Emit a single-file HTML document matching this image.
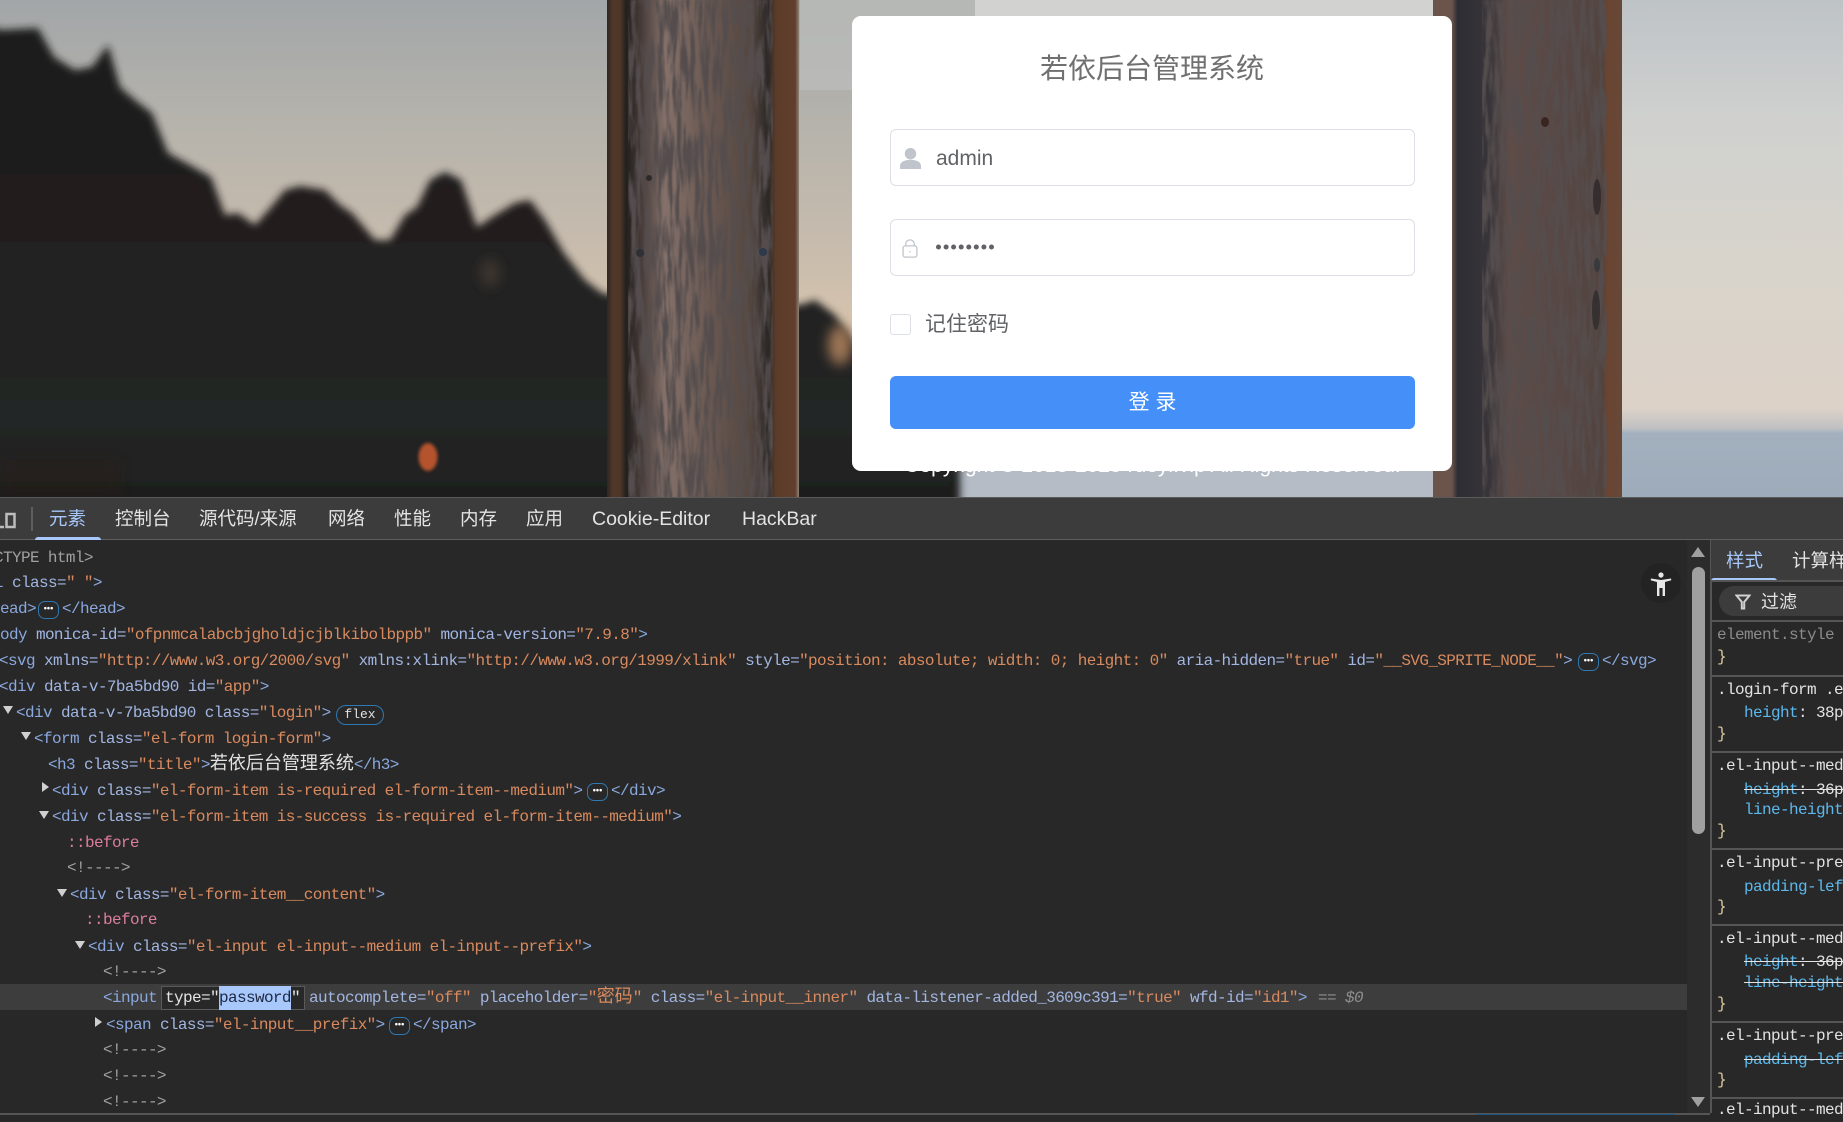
<!DOCTYPE html>
<html lang="zh"><head><meta charset="utf-8"><title>若依后台管理系统</title>
<style>
*{box-sizing:border-box}
html,body{margin:0;padding:0;width:1843px;height:1115px;overflow:hidden;background:#282828}
#bg{position:absolute;left:0;top:0;width:1843px;height:498px;display:block}
.copy{position:absolute;left:901px;top:454px;width:503px;text-align:center;color:#fff;font:21px/24px "Liberation Sans",sans-serif;white-space:nowrap}
.card{position:absolute;left:852px;top:16px;width:600px;height:455px;background:#fff;border-radius:9px}
.title{position:absolute;left:0;top:35px;width:100%;text-align:center;font:28px/36px "Liberation Sans","Noto Sans CJK SC",sans-serif;color:#707070}
.inp{position:absolute;left:38px;width:525px;height:57px;border:1.5px solid #dcdfe6;border-radius:6px}
.inp .t{position:absolute;left:45px;top:2px;font:21px/54px "Liberation Sans",sans-serif;color:#606266}
.chk{position:absolute;left:38px;top:298px;width:21px;height:21px;border:1.5px solid #dcdfe6;border-radius:3px}
.rem{position:absolute;left:73px;top:294px;font:21px/30px "Liberation Sans","Noto Sans CJK SC",sans-serif;color:#606266}
.btn{position:absolute;left:38px;top:360px;width:525px;height:53px;background:#448ff8;border-radius:6px;color:#fff;text-align:center;font:21px/53px "Liberation Sans","Noto Sans CJK SC",sans-serif}
.dev{position:absolute;left:0;top:497px;width:1843px;height:618px;background:#282828;overflow:hidden}
.bar{position:absolute;left:0;top:0;width:1843px;height:43px;background:#3c3c3c;border-top:1.5px solid #5a5a5a;border-bottom:1.5px solid #5e5e5e}
.tab{position:absolute;top:505px;font:18.5px/28px "Liberation Sans","Noto Sans CJK SC",sans-serif;color:#e3e3e3;white-space:nowrap}
.r{position:absolute;height:26px;font:16px/26px "Liberation Mono",monospace;letter-spacing:-.613px;white-space:pre;color:#8aa8de}
.b{color:#8aa8de}.a{color:#a2b6e2}.o{color:#d98a5e}.g{color:#a0a0a0}.p{color:#dc7e9c}.w{color:#e3e3e3}
.c{font-family:"Noto Sans CJK SC",sans-serif;font-size:18px;letter-spacing:0;line-height:0}
.pill{position:absolute;border:1.5px solid #2f78b0;border-radius:7px;width:21px;height:18px;color:#fff;text-align:center;font:bold 9px/13px "Liberation Sans",sans-serif;letter-spacing:0}
.tri{position:absolute;width:0;height:0}
.s{position:absolute;left:1717px;height:24px;font:16px/24px "Liberation Mono",monospace;letter-spacing:-.6px;white-space:pre;color:#e3e3e3;width:126px;overflow:hidden}
.hr{position:absolute;left:1711px;width:132px;height:1.5px;background:#555}
.cy{color:#5cb8ec}
.st{text-decoration:line-through;text-decoration-color:#e3e3e3}
.brace{color:#d9c9a0}
</style></head><body>

<svg id="bg" viewBox="0 0 1843 498" xmlns="http://www.w3.org/2000/svg" preserveAspectRatio="none">
<defs>
<linearGradient id="sky" x1="0" y1="0" x2="0" y2="1">
<stop offset="0" stop-color="#a2a6a8"/><stop offset=".25" stop-color="#b6b3ac"/><stop offset=".48" stop-color="#c6bbad"/><stop offset=".68" stop-color="#d8c4ad"/><stop offset=".85" stop-color="#e0b998"/><stop offset="1" stop-color="#d8a880"/>
</linearGradient>
<linearGradient id="sky2" x1="0" y1="0" x2="0" y2="1">
<stop offset="0" stop-color="#bec3c6"/><stop offset=".25" stop-color="#d0d1cf"/><stop offset=".55" stop-color="#d9d4cb"/><stop offset=".82" stop-color="#dcd2c8"/><stop offset=".86" stop-color="#c0c0c2"/><stop offset=".87" stop-color="#a3b0be"/><stop offset="1" stop-color="#9dabba"/>
</linearGradient>
<linearGradient id="w1" x1="0" y1="0" x2="1" y2="0">
<stop offset="0" stop-color="#2e2624"/><stop offset=".03" stop-color="#523828"/><stop offset=".07" stop-color="#4c3628"/><stop offset=".1" stop-color="#221f1e"/><stop offset=".17" stop-color="#423836"/><stop offset=".3" stop-color="#85716a"/><stop offset=".5" stop-color="#6e5c55"/><stop offset=".75" stop-color="#54463f"/><stop offset=".84" stop-color="#2a2726"/><stop offset=".88" stop-color="#5c3c2a"/><stop offset=".98" stop-color="#613e2c"/><stop offset="1" stop-color="#8a8478"/>
</linearGradient>
<linearGradient id="w2" x1="0" y1="0" x2="1" y2="0">
<stop offset="0" stop-color="#6a544c"/><stop offset=".1" stop-color="#6a544c"/><stop offset=".13" stop-color="#2d2d33"/><stop offset=".3" stop-color="#38353a"/><stop offset=".4" stop-color="#5e4c48"/><stop offset=".7" stop-color="#574744"/><stop offset=".9" stop-color="#53433e"/><stop offset=".92" stop-color="#6a4430"/><stop offset="1" stop-color="#66483a"/>
</linearGradient>
<linearGradient id="tree" x1="0" y1="0" x2="0" y2="1">
<stop offset="0" stop-color="#1b1a1a"/><stop offset=".5" stop-color="#222020"/><stop offset=".8" stop-color="#232625"/><stop offset="1" stop-color="#1d1c1c"/>
</linearGradient>
<filter id="bl" x="-5%" y="-5%" width="110%" height="110%"><feGaussianBlur stdDeviation="4"/></filter>
<filter id="bl3" x="-50%" y="-50%" width="200%" height="200%"><feGaussianBlur stdDeviation="6"/></filter>
<filter id="bl2"><feGaussianBlur stdDeviation="1.6"/></filter>
<filter id="wood" x="0" y="0" width="1" height="1">
<feTurbulence type="fractalNoise" baseFrequency="0.22 0.022" numOctaves="4" seed="7"/>
<feColorMatrix values="0 0 0 0 .09  0 0 0 0 .075  0 0 0 0 .075  4 0 0 0 -1.55"/>
<feGaussianBlur stdDeviation=".5"/>
</filter>
</defs>
<rect width="1843" height="498" fill="url(#sky)"/>
<rect x="1610" width="233" height="498" fill="url(#sky2)"/>
<rect x="800" width="175" height="90" fill="#bcbdbb" opacity=".75"/>
<rect x="975" width="470" height="498" fill="#d2d2d0"/>
<rect x="953" y="440" width="490" height="58" fill="#b6bcc6"/>
<polygon filter="url(#bl)" fill="url(#tree)" points="-20,20 0,30 38,28 54,57 75,70 92,67 108,45 120,87 135,100 152,113 168,153 190,165 211,177 225,215 238,213 255,225 271,207 285,190 300,186 325,190 340,205 352,213 375,240 390,240 405,215 417,207 430,180 445,172 461,180 477,227 495,215 515,203 530,200 545,220 564,253 585,280 602,293 640,300 800,305 815,300 835,315 860,350 960,370 960,520 -20,520"/>
<ellipse cx="840" cy="345" rx="12" ry="20" fill="#9c7454" filter="url(#bl3)"/>
<ellipse cx="428" cy="457" rx="9.5" ry="14" fill="#b5532d" filter="url(#bl2)"/>
<ellipse cx="490" cy="273" rx="10" ry="14" fill="#3e352e" filter="url(#bl3)"/>
<rect x="0" y="460" width="120" height="38" fill="#2a1a18" opacity=".4" filter="url(#bl3)"/>
<rect x="607" width="192" height="498" fill="url(#w1)"/>
<rect x="628" width="145" height="498" filter="url(#wood)"/>
<circle cx="640" cy="253" r="4" fill="#2e3036"/><circle cx="763" cy="252" r="4" fill="#2c3a4a"/><circle cx="649" cy="178" r="3" fill="#2c2a2a"/>
<rect x="1433" width="189" height="498" fill="url(#w2)"/>
<rect x="1482" width="125" height="498" filter="url(#wood)"/>
<ellipse cx="1545" cy="122" rx="4" ry="5" fill="#3a2422"/><ellipse cx="1597" cy="197" rx="4" ry="18" fill="#2a2426" opacity=".7"/><ellipse cx="1597" cy="265" rx="3" ry="7" fill="#2c343a" opacity=".7"/><ellipse cx="1596" cy="310" rx="4" ry="20" fill="#2a2628" opacity=".7"/>
</svg>

<div class="copy">Copyright © 2018-2025 ruoyi.vip All Rights Reserved.</div>

<div class="card">
<div class="title">若依后台管理系统</div>
<div class="inp" style="top:113px"><svg style="position:absolute;left:9px;top:18px" width="21" height="21" viewBox="0 0 22 22"><circle cx="11" cy="6" r="6" fill="#c0c4cc"/><path d="M0 22v-3c0-4 4-6.500 11-6.500s11 2.500 11 6.500v3z" fill="#c0c4cc"/></svg><span class="t">admin</span></div>
<div class="inp" style="top:203px"><svg style="position:absolute;left:11px;top:19px" width="16" height="19" viewBox="0 0 18 22" fill="none" stroke="#c0c4cc" stroke-width="1.5"><rect x="1" y="8" width="16" height="13" rx="2.500"/><path d="M4 8V6a5 5 0 0 1 10 0v2"/><path d="M9 14v1.500" stroke-width="1.600"/></svg><span class="t" style="left:45px;top:0"><svg width="58" height="54" viewBox="0 0 58 54" style="display:block" fill="#606266"><circle cx="2.500" cy="27" r="2.500"/><circle cx="10.100" cy="27" r="2.500"/><circle cx="17.600" cy="27" r="2.500"/><circle cx="25.200" cy="27" r="2.500"/><circle cx="32.800" cy="27" r="2.500"/><circle cx="40.300" cy="27" r="2.500"/><circle cx="47.900" cy="27" r="2.500"/><circle cx="55.500" cy="27" r="2.500"/></svg></span></div>
<div class="chk"></div>
<div class="rem">记住密码</div>
<div class="btn">登 录</div>
</div>

<div class="dev"><div class="bar"></div></div>

<svg style="position:absolute;left:0;top:508px" width="20" height="24" viewBox="0 0 20 24" fill="none" stroke="#bdbdbd" stroke-width="2.500"><rect x="6.500" y="6" width="8" height="13"/><path d="M-2 19H4"/></svg>
<div style="position:absolute;left:31px;top:507px;width:1.5px;height:24px;background:#5e5e5e"></div>
<div class="tab" style="left:49px;color:#a8c7fa">元素</div>
<div style="position:absolute;left:35px;top:537px;width:66px;height:3px;background:#a8c7fa;border-radius:3px 3px 0 0"></div>
<div class="tab" style="left:115px">控制台</div>
<div class="tab" style="left:199px">源代码/来源</div>
<div class="tab" style="left:328px">网络</div>
<div class="tab" style="left:394px">性能</div>
<div class="tab" style="left:460px">内存</div>
<div class="tab" style="left:526px">应用</div>
<div class="tab" style="left:592px;font-size:19.500px">Cookie-Editor</div>
<div class="tab" style="left:742px;font-size:19.500px">HackBar</div>

<!-- highlight row -->
<div style="position:absolute;left:0;top:984px;width:1687px;height:26px;background:#3d3d3d"></div>
<div style="position:absolute;left:161px;top:986px;width:144px;height:24px;background:#282828;border:1.5px solid #5a5a5a"></div>
<div style="position:absolute;left:219px;top:986px;width:72px;height:24px;background:#a8c7fa"></div>

<div class="r g" style="left:-6px;top:545px">CTYPE html&gt;</div>
<div class="r" style="left:-6px;top:570px"><span class="b">l</span> <span class="a">class</span><span class="a">=</span><span class="o">" "</span><span class="b">&gt;</span></div>
<div class="r" style="left:-9px;top:596px">head&gt;</div>
<div class="pill" style="left:38px;top:601px">•••</div>
<div class="r" style="left:62px;top:596px">&lt;/head&gt;</div>
<div class="r" style="left:-9px;top:622px">body <span class="a">monica-id=</span><span class="o">"ofpnmcalabcbjgholdjcjblkibolbppb"</span> <span class="a">monica-version=</span><span class="o">"7.9.8"</span>&gt;</div>
<div class="r" style="left:-1px;top:648px">&lt;svg <span class="a">xmlns=</span><span class="o">"http://www.w3.org/2000/svg"</span> <span class="a">xmlns:xlink=</span><span class="o">"http://www.w3.org/1999/xlink"</span> <span class="a">style=</span><span class="o">"position: absolute; width: 0; height: 0"</span> <span class="a">aria-hidden=</span><span class="o">"true"</span> <span class="a">id=</span><span class="o">"__SVG_SPRITE_NODE__"</span>&gt;</div>
<div class="pill" style="left:1578px;top:653px">•••</div>
<div class="r" style="left:1602px;top:648px">&lt;/svg&gt;</div>
<div class="r" style="left:-1px;top:674px">&lt;div <span class="a">data-v-7ba5bd90</span> <span class="a">id=</span><span class="o">"app"</span>&gt;</div>
<div class="tri" style="left:3px;top:706px;border-left:5.500px solid transparent;border-right:5.500px solid transparent;border-top:8px solid #d0d0d0"></div>
<div class="r" style="left:16px;top:700px">&lt;div <span class="a">data-v-7ba5bd90</span> <span class="a">class=</span><span class="o">"login"</span>&gt;</div>
<div class="pill" style="left:336px;top:705px;width:48px;height:20px;border-radius:10px;font:13px/17px 'Liberation Mono',monospace;color:#e3e3e3">flex</div>
<div class="tri" style="left:21px;top:732px;border-left:5.500px solid transparent;border-right:5.500px solid transparent;border-top:8px solid #d0d0d0"></div>
<div class="r" style="left:34px;top:726px">&lt;form <span class="a">class=</span><span class="o">"el-form login-form"</span>&gt;</div>
<div class="r" style="left:48px;top:752px">&lt;h3 <span class="a">class=</span><span class="o">"title"</span>&gt;<span class="c w">若依后台管理系统</span>&lt;/h3&gt;</div>
<div class="tri" style="left:42px;top:782px;border-top:5.500px solid transparent;border-bottom:5.500px solid transparent;border-left:7px solid #d0d0d0"></div>
<div class="r" style="left:52px;top:778px">&lt;div <span class="a">class=</span><span class="o">"el-form-item is-required el-form-item--medium"</span>&gt;</div>
<div class="pill" style="left:587px;top:783px">•••</div>
<div class="r" style="left:611px;top:778px">&lt;/div&gt;</div>
<div class="tri" style="left:39px;top:811px;border-left:5.500px solid transparent;border-right:5.500px solid transparent;border-top:8px solid #d0d0d0"></div>
<div class="r" style="left:52px;top:804px">&lt;div <span class="a">class=</span><span class="o">"el-form-item is-success is-required el-form-item--medium"</span>&gt;</div>
<div class="r p" style="left:67px;top:830px">::before</div>
<div class="r g" style="left:67px;top:855px">&lt;!----&gt;</div>
<div class="tri" style="left:57px;top:889px;border-left:5.500px solid transparent;border-right:5.500px solid transparent;border-top:8px solid #d0d0d0"></div>
<div class="r" style="left:70px;top:882px">&lt;div <span class="a">class=</span><span class="o">"el-form-item__content"</span>&gt;</div>
<div class="r p" style="left:85px;top:907px">::before</div>
<div class="tri" style="left:75px;top:941px;border-left:5.500px solid transparent;border-right:5.500px solid transparent;border-top:8px solid #d0d0d0"></div>
<div class="r" style="left:88px;top:934px">&lt;div <span class="a">class=</span><span class="o">"el-input el-input--medium el-input--prefix"</span>&gt;</div>
<div class="r g" style="left:103px;top:959px">&lt;!----&gt;</div>
<div class="r" style="left:103px;top:985px">&lt;input</div>
<div class="r w" style="left:165px;top:985px">type="</div>
<div class="r" style="left:219px;top:985px;color:#1d2a44">password</div>
<div class="r w" style="left:291px;top:985px">"</div>
<div class="r" style="left:309px;top:985px"><span class="a">autocomplete=</span><span class="o">"off"</span> <span class="a">placeholder=</span><span class="o">"<span class="c">密码</span>"</span> <span class="a">class=</span><span class="o">"el-input__inner"</span> <span class="a">data-listener-added_3609c391=</span><span class="o">"true"</span> <span class="a">wfd-id=</span><span class="o">"id1"</span>&gt;</div>
<div class="r g" style="left:1318px;top:985px;font-style:italic;color:#8f8f8f">== $0</div>
<div class="tri" style="left:95px;top:1017px;border-top:5.500px solid transparent;border-bottom:5.500px solid transparent;border-left:7px solid #d0d0d0"></div>
<div class="r" style="left:106px;top:1012px">&lt;span <span class="a">class=</span><span class="o">"el-input__prefix"</span>&gt;</div>
<div class="pill" style="left:389px;top:1017px">•••</div>
<div class="r" style="left:413px;top:1012px">&lt;/span&gt;</div>
<div class="r g" style="left:103px;top:1037px">&lt;!----&gt;</div>
<div class="r g" style="left:103px;top:1063px">&lt;!----&gt;</div>
<div class="r g" style="left:103px;top:1089px">&lt;!----&gt;</div>

<!-- scrollbar -->
<div style="position:absolute;left:1687px;top:540px;width:23px;height:573px;background:#2c2c2c"></div>
<div class="tri" style="left:1691px;top:547px;border-left:7.500px solid transparent;border-right:7.500px solid transparent;border-bottom:10px solid #a0a0a0"></div>
<div style="position:absolute;left:1692px;top:567px;width:13px;height:267px;background:#a0a0a0;border-radius:7px"></div>
<div class="tri" style="left:1691px;top:1097px;border-left:7.500px solid transparent;border-right:7.500px solid transparent;border-top:10px solid #a0a0a0"></div>

<!-- accessibility button -->
<div style="position:absolute;left:1641px;top:563px;width:40px;height:40px;border-radius:50%;background:#232323"></div>
<svg style="position:absolute;left:1650px;top:571px" width="22" height="26" viewBox="0 0 22 26" fill="#e8e8e8"><circle cx="11" cy="4" r="2.600"/><path d="M1 7.500 11 9l10-1.500.3 1.800-6.300 1.700V25h-2.400v-8h-3.200v8H7V11L.7 9.300z"/></svg>

<!-- styles pane -->
<div style="position:absolute;left:1710px;top:540px;width:1.5px;height:573px;background:#555"></div>
<div style="position:absolute;left:1711px;top:540px;width:132px;height:40px;background:#3c3c3c"></div>
<div class="tab" style="left:1726px;top:547px;color:#a8c7fa">样式</div>
<div class="tab" style="left:1792px;top:547px;width:51px;overflow:hidden">计算样式</div>
<div style="position:absolute;left:1711px;top:578px;width:66px;height:3px;background:#a8c7fa;border-radius:3px 3px 0 0"></div>
<div class="hr" style="top:580px"></div>
<div style="position:absolute;left:1719px;top:586px;width:140px;height:30px;border-radius:15px;background:#3c3c3c"></div>
<svg style="position:absolute;left:1735px;top:594px" width="16" height="16" viewBox="0 0 16 16" fill="none" stroke="#d0d0d0" stroke-width="2"><path d="M1.500 1.500h13L9.200 8v6.500H6.800V8z"/></svg>
<div class="tab" style="left:1761px;top:588px;font-size:18px">过滤</div>
<div class="hr" style="top:620px"></div>

<div class="s" style="top:623px;color:#8b8b8b">element.style</div>
<div class="s brace" style="top:645px">}</div>
<div class="hr" style="top:675px"></div>
<div class="s" style="top:678px">.login-form .el-input</div>
<div class="s" style="top:701px">   <span class="cy">height</span>: 38px</div>
<div class="s brace" style="top:722px">}</div>
<div class="hr" style="top:751px"></div>
<div class="s" style="top:754px">.el-input--medium</div>
<div class="s" style="top:778px">   <span class="st"><span class="cy">height</span>: 36px</span></div>
<div class="s" style="top:798px">   <span class="cy">line-height</span>: 36px</div>
<div class="s brace" style="top:819px">}</div>
<div class="hr" style="top:848px"></div>
<div class="s" style="top:851px">.el-input--prefix</div>
<div class="s" style="top:875px">   <span class="cy">padding-left</span>: 30px</div>
<div class="s brace" style="top:895px">}</div>
<div class="hr" style="top:924px"></div>
<div class="s" style="top:927px">.el-input--medium</div>
<div class="s" style="top:950px">   <span class="st"><span class="cy">height</span>: 36px</span></div>
<div class="s" style="top:971px">   <span class="st"><span class="cy">line-height</span>: 36px</span></div>
<div class="s brace" style="top:992px">}</div>
<div class="hr" style="top:1021px"></div>
<div class="s" style="top:1024px">.el-input--prefix</div>
<div class="s" style="top:1048px">   <span class="st"><span class="cy">padding-left</span>: 30px</span></div>
<div class="s brace" style="top:1068px">}</div>
<div class="hr" style="top:1097px"></div>
<div class="s" style="top:1098px">.el-input--medium</div>

<!-- bottom line -->
<div style="position:absolute;left:0;top:1113px;width:1710px;height:2px;background:#555"></div>
<div style="position:absolute;left:1476px;top:1114px;width:199px;height:1px;background:#1d5580"></div>
</body></html>
